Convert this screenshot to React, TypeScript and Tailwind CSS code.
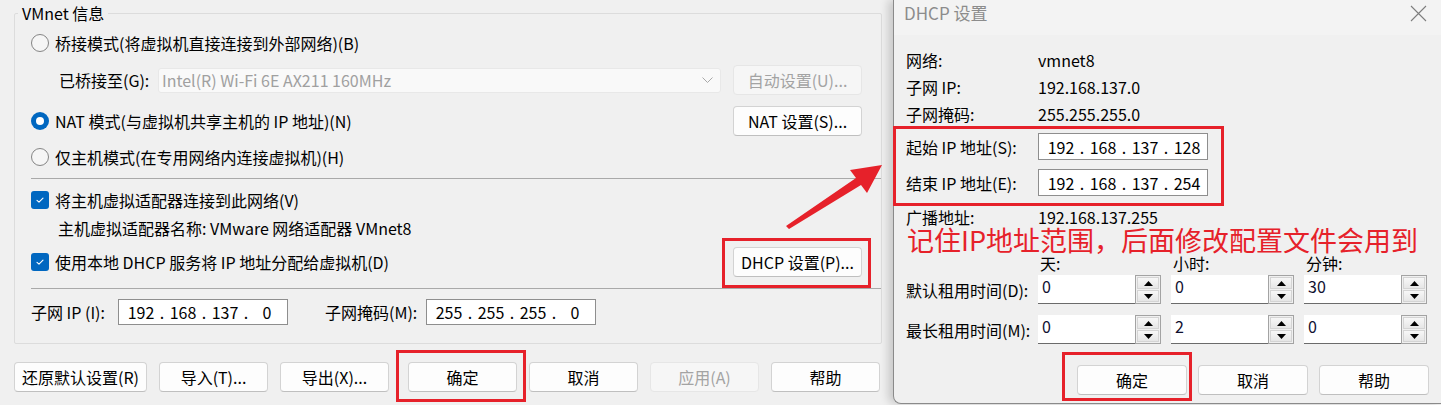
import React from "react";

// Windows-style dialog widgets
function Btn({ children, className = "", disabled = false }: { children: React.ReactNode; className?: string; disabled?: boolean }) {
    return (
        <div
            className={`flex h-[30px] shrink-0 items-center justify-center rounded-[4px] border text-[16px] leading-[20px] ${
                disabled
                    ? "border-[#e6e6e6] bg-[#f6f6f6] text-[#a3a3a3]"
                    : "border-[#d3d3d3] border-b-[#bfbfbf] bg-[#fdfdfd] text-black"
            } ${className}`}
        >
            {children}
        </div>
    );
}

function Radio({ checked = false }: { checked?: boolean }) {
    if (checked) {
        return (
            <span className="flex h-[18px] w-[18px] shrink-0 items-center justify-center rounded-full bg-[#0067c0]">
                <span className="h-[8px] w-[8px] rounded-full bg-white" />
            </span>
        );
    }
    return <span className="h-[18px] w-[18px] shrink-0 rounded-full border border-[#858585] bg-[#f6f6f6]" />;
}

function Check() {
    return (
        <span className="flex h-[18px] w-[18px] shrink-0 items-center justify-center rounded-[3px] bg-[#0067c0]">
            <svg width="18" height="18" viewBox="0 0 18 18">
                <path d="M6 9.4 L8 11.2 L12 7.2" stroke="white" strokeWidth="1.1" fill="none" strokeLinecap="round" strokeLinejoin="round" />
            </svg>
        </span>
    );
}

function IpField({ parts, className = "" }: { parts: string[]; className?: string }) {
    return (
        <div className={`flex h-[26px] w-[170px] shrink-0 items-center border border-[#8e8e8e] bg-white pl-[5px] text-[16px] leading-[20px] ${className}`}>
            {parts.map((p, i) => (
                <React.Fragment key={i}>
                    <span className="w-[34px] text-center">{p}</span>
                    {i < 3 && <span className="w-[8px] text-center">.</span>}
                </React.Fragment>
            ))}
        </div>
    );
}

function Arrow({ up }: { up: boolean }) {
    return (
        <div className="flex flex-1 items-center justify-center border border-[#d4d4d4] bg-gradient-to-b from-[#f7f7f7] to-[#e6e6e6]">
            <svg width="9" height="5" viewBox="0 0 9 5">
                <polygon points={up ? "0,5 4.5,0 9,5" : "0,0 4.5,5 9,0"} fill="#000" />
            </svg>
        </div>
    );
}

function Spin({ value, className = "" }: { value: string; className?: string }) {
    return (
        <div className={`flex h-[29px] w-[123px] shrink-0 ${className}`}>
            <div className="flex-1 border-b border-[#6b6b6b] bg-white pl-[4px] pt-[1px] text-[16px] leading-[20px] text-[#101030]">
                {value}
            </div>
            <div className="flex w-[26px] flex-col gap-[1px] border border-[#a3a3a3] bg-[#f0f0f0] p-[1px]">
                <Arrow up />
                <Arrow up={false} />
            </div>
        </div>
    );
}

function LeftDialog() {
    return (
        <div className="w-[893px] shrink-0 pl-[14px] pt-[3px]">
            <fieldset className="h-[341px] w-[868px] rounded-[2px] border border-[#dcdcdc] px-0">
                <legend className="ml-[3px] px-[4px] text-[16px] leading-[20px]">VMnet 信息</legend>
                <div className="flex flex-col pl-[16px] pr-[19px] text-[16px] leading-[20px]">
                    <div className="mt-[8px] flex h-[24px] items-center gap-[6px]">
                        <Radio />
                        <span>桥接模式(将虚拟机直接连接到外部网络)(B)</span>
                    </div>
                    <div className="mt-[10px] flex h-[30px] items-center pl-[28px]">
                        <span className="w-[99px] shrink-0">已桥接至(G):</span>
                        <div className="flex h-[25px] flex-1 items-center justify-between rounded-[3px] border border-[#e8e8e8] bg-[#f9f9f9] pl-[3px] pr-[7px] text-[#a0a0a0]">
                            <span>Intel(R) Wi-Fi 6E AX211 160MHz</span>
                            <svg width="11" height="6" viewBox="0 0 11 6">
                                <path d="M0.5 0.5 L5.5 5.5 L10.5 0.5" stroke="#a8a8a8" strokeWidth="1" fill="none" />
                            </svg>
                        </div>
                        <Btn disabled className="ml-[12px] w-[129px]">
                            自动设置(U)...
                        </Btn>
                    </div>
                    <div className="mt-[11px] flex h-[30px] items-center gap-[6px]">
                        <Radio checked />
                        <span>NAT 模式(与虚拟机共享主机的 IP 地址)(N)</span>
                        <Btn className="ml-auto w-[129px]">NAT 设置(S)...</Btn>
                    </div>
                    <div className="mt-[9px] flex h-[24px] items-center gap-[6px]">
                        <Radio />
                        <span>仅主机模式(在专用网络内连接虚拟机)(H)</span>
                    </div>
                    <div className="-mr-[19px] mt-[9px] h-px bg-[#a9a9a9]" />
                    <div className="mt-[9px] flex h-[24px] items-center gap-[6px]">
                        <Check />
                        <span>将主机虚拟适配器连接到此网络(V)</span>
                    </div>
                    <div className="mt-[4px] flex h-[24px] items-center pl-[27px]">
                        主机虚拟适配器名称: VMware 网络适配器 VMnet8
                    </div>
                    <div className="mt-[7px] flex h-[30px] items-center gap-[6px]">
                        <Check />
                        <span>使用本地 DHCP 服务将 IP 地址分配给虚拟机(D)</span>
                        <Btn className="ml-auto w-[129px]">DHCP 设置(P)...</Btn>
                    </div>
                    <div className="-mr-[19px] mt-[11px] h-px bg-[#a9a9a9]" />
                    <div className="mt-[10px] flex h-[26px] items-center">
                        <span className="w-[87px] shrink-0">子网 IP (I):</span>
                        <IpField parts={["192", "168", "137", "0"]} />
                        <span className="ml-[37px] w-[101px] shrink-0">子网掩码(M):</span>
                        <IpField parts={["255", "255", "255", "0"]} />
                    </div>
                </div>
            </fieldset>
            <div className="mt-[18px] flex">
                <Btn className="w-[133px]">还原默认设置(R)</Btn>
                <Btn className="ml-[12px] w-[109px]">导入(T)...</Btn>
                <Btn className="ml-[12px] w-[109px]">导出(X)...</Btn>
                <Btn className="ml-[19px] w-[109px]">确定</Btn>
                <Btn className="ml-[12px] w-[109px]">取消</Btn>
                <Btn disabled className="ml-[12px] w-[109px]">
                    应用(A)
                </Btn>
                <Btn className="ml-[12px] w-[109px]">帮助</Btn>
            </div>
        </div>
    );
}

function InfoRow({ label, value, className = "" }: { label: string; value: string; className?: string }) {
    return (
        <div className={`flex h-[27px] items-center ${className}`}>
            <span className="w-[132px] shrink-0">{label}</span>
            <span>{value}</span>
        </div>
    );
}

function RightDialog() {
    return (
        <div className="relative z-10 flex h-[404px] flex-1 flex-col rounded-bl-[8px] border-b border-l border-[#8a8a8a] bg-[#f0f0f0] shadow-[-5px_0_9px_rgba(0,0,0,0.16)]">
            <div className="flex h-[35px] items-start justify-between bg-[#f3f3f3] pl-[10px] pr-[14px] pt-[3px]">
                <span className="text-[17px] leading-[20px] text-[#8c8c8c]">DHCP 设置</span>
                <svg className="mt-[2px]" width="17" height="17" viewBox="0 0 17 17">
                    <path d="M1 1 L16 16 M16 1 L1 16" stroke="#7d7d7d" strokeWidth="1.1" />
                </svg>
            </div>
            <div className="flex flex-col pl-[12px] pt-[11px] text-[16px] leading-[20px]">
                <InfoRow label="网络:" value="vmnet8" />
                <InfoRow label="子网 IP:" value="192.168.137.0" />
                <InfoRow label="子网掩码:" value="255.255.255.0" />
                <div className="mt-[6px] flex h-[27px] items-center">
                    <span className="w-[132px] shrink-0">起始 IP 地址(S):</span>
                    <IpField className="h-[27px]" parts={["192", "168", "137", "128"]} />
                </div>
                <div className="mt-[9px] flex h-[27px] items-center">
                    <span className="w-[132px] shrink-0">结束 IP 地址(E):</span>
                    <IpField className="h-[27px]" parts={["192", "168", "137", "254"]} />
                </div>
                <InfoRow className="mt-[7px] h-[24px]" label="广播地址:" value="192.168.137.255" />
                <div className="mt-[23px] flex h-[19px] items-center pl-[134px]">
                    <span className="w-[133px]">天:</span>
                    <span className="w-[133px]">小时:</span>
                    <span>分钟:</span>
                </div>
                <div className="mt-[3px] flex items-center">
                    <span className="w-[132px] shrink-0">默认租用时间(D):</span>
                    <Spin value="0" />
                    <Spin value="0" className="ml-[10px]" />
                    <Spin value="30" className="ml-[10px]" />
                </div>
                <div className="mt-[11px] flex items-center">
                    <span className="w-[132px] shrink-0">最长租用时间(M):</span>
                    <Spin value="0" />
                    <Spin value="2" className="ml-[10px]" />
                    <Spin value="0" className="ml-[10px]" />
                </div>
                <div className="mt-[21px] flex justify-end gap-[11px] pr-[12px]">
                    <Btn className="w-[110px]">确定</Btn>
                    <Btn className="w-[110px]">取消</Btn>
                    <Btn className="w-[110px]">帮助</Btn>
                </div>
            </div>
        </div>
    );
}

// red markup drawn on top of the screenshot
function Annotations() {
    return (
        <div className="pointer-events-none absolute inset-0 z-20">
            <div className="absolute left-[722px] top-[238px] h-[50px] w-[149px] border-[3px] border-[#e6212a]" />
            <div className="absolute left-[396px] top-[350px] h-[52px] w-[130px] border-[3px] border-[#e6212a]" />
            <div className="absolute left-[893px] top-[126px] h-[80px] w-[331px] border-[3px] border-[#e6212a]" />
            <div className="absolute left-[1062px] top-[352px] h-[49px] w-[130px] border-[3px] border-[#e6212a]" />
            <svg className="absolute left-0 top-0" width="1441" height="405" viewBox="0 0 1441 405">
                <polygon points="786,226 856,178 850,170 882,165 867,193 861,185 789,229" fill="#e6212a" />
            </svg>
            <div className="absolute left-[907px] top-[224px] whitespace-nowrap text-[27px] leading-[31px] text-[#e6212a]">
                记住IP地址范围，后面修改配置文件会用到
            </div>
        </div>
    );
}

export default function App() {
    return (
        <div className="relative flex h-[405px] w-[1441px] overflow-hidden bg-[#f0f0f0] font-['Microsoft_YaHei_UI','Noto_Sans_CJK_SC',sans-serif] text-black">
            <LeftDialog />
            <RightDialog />
            <Annotations />
        </div>
    );
}
